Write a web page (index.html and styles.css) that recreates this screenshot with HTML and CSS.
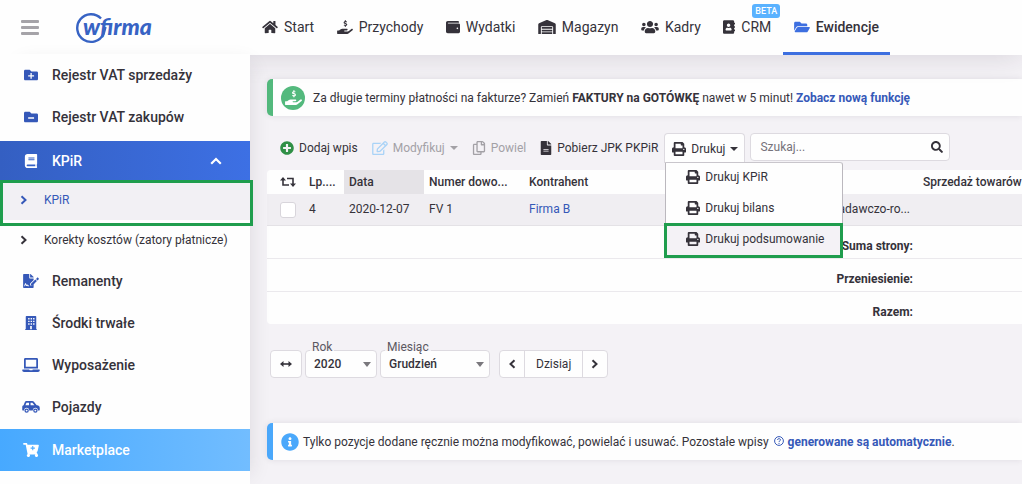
FILE: index.html
```html
<!DOCTYPE html>
<html lang="pl">
<head>
<meta charset="UTF-8">
<meta name="viewport" content="width=device-width, initial-scale=1.0">
<title>wfirma - KPiR</title>
<link rel="stylesheet" href="styles.css">
</head>
<body>
    <!-- ikony -->
    <svg class="sprite" aria-hidden="true">
        <symbol id="i-home" viewBox="0 0 576 512"><path d="M280.37 148.26L96 300.11V464a16 16 0 0 0 16 16l112.06-.29a16 16 0 0 0 15.92-16V368a16 16 0 0 1 16-16h64a16 16 0 0 1 16 16v95.64a16 16 0 0 0 16 16.05L464 480a16 16 0 0 0 16-16V300L295.67 148.26a12.19 12.19 0 0 0-15.3 0zM571.6 251.47L488 182.56V44.05a12 12 0 0 0-12-12h-56a12 12 0 0 0-12 12v72.61L318.47 43a48 48 0 0 0-61 0L4.34 251.47a12 12 0 0 0-1.6 16.9l25.5 31A12 12 0 0 0 45.15 301l235.22-193.74a12.19 12.19 0 0 1 15.3 0L530.9 301a12 12 0 0 0 16.9-1.6l25.5-31a12 12 0 0 0-1.7-16.93z"/></symbol>
        <symbol id="i-hand" viewBox="0 0 576 512"><path d="M565.3 328.1c-11.8-10.7-30.2-10-42.6 0L430.3 402c-11.3 9.1-25.4 14-40 14H272c-8.8 0-16-7.2-16-16s7.2-16 16-16h78.3c15.9 0 30.7-10.9 33.3-26.6 3.3-20-12.1-37.4-31.6-37.4H192c-27 0-53.1 9.3-74.1 26.3L71.4 384H16c-8.8 0-16 7.2-16 16v96c0 8.8 7.2 16 16 16h356.8c14.5 0 28.6-4.9 40-14L564 377c15.2-12.1 16.4-35.3 1.3-48.9z"/><path d="M352 72c-20-14-92-24-96 20-3 44 98 24 96 74-2 44-76 38-100 14M302 8v42M302 204v42" fill="none" stroke="currentColor" stroke-width="42"/></symbol>
        <symbol id="i-wallet" viewBox="0 0 512 512"><path d="M461.2 128H80c-8.84 0-16-7.16-16-16s7.16-16 16-16h384c8.84 0 16-7.16 16-16 0-26.51-21.49-48-48-48H64C28.65 32 0 60.65 0 96v320c0 35.35 28.65 64 64 64h397.2c28.02 0 50.8-21.53 50.8-48V176c0-26.47-22.78-48-50.8-48zM416 336c-17.67 0-32-14.33-32-32s14.33-32 32-32 32 14.33 32 32-14.33 32-32 32z"/></symbol>
        <symbol id="i-warehouse" viewBox="0 0 640 512"><path d="M504 352H136.4c-4.4 0-8 3.6-8 8l-.1 48c0 4.4 3.6 8 8 8H504c4.4 0 8-3.6 8-8v-48c0-4.4-3.6-8-8-8zm0 96H136.1c-4.4 0-8 3.6-8 8l-.1 48c0 4.4 3.6 8 8 8h368c4.4 0 8-3.6 8-8v-48c0-4.4-3.6-8-8-8zm0-192H136.6c-4.4 0-8 3.6-8 8l-.1 48c0 4.4 3.6 8 8 8H504c4.4 0 8-3.6 8-8v-48c0-4.4-3.6-8-8-8zm106.5-139L338.4 3.7a48.15 48.15 0 0 0-36.9 0L29.5 117C11.7 124.5 0 141.9 0 161.3V504c0 4.4 3.6 8 8 8h80c4.4 0 8-3.6 8-8V256c0-17.6 14.6-32 32.6-32h382.8c18 0 32.6 14.4 32.6 32v248c0 4.4 3.6 8 8 8h80c4.4 0 8-3.6 8-8V161.3c0-19.4-11.7-36.8-29.5-44.3z"/></symbol>
        <symbol id="i-users" viewBox="0 0 640 512"><path d="M96 224c35.3 0 64-28.7 64-64s-28.7-64-64-64-64 28.7-64 64 28.7 64 64 64zm448 0c35.3 0 64-28.7 64-64s-28.7-64-64-64-64 28.7-64 64 28.7 64 64 64zm32 32h-64c-17.6 0-33.5 7.1-45.1 18.6 40.3 22.1 68.9 62 75.1 109.4h66c17.7 0 32-14.3 32-32v-32c0-35.3-28.7-64-64-64zm-256 0c61.9 0 112-50.1 112-112S381.9 32 320 32 208 82.1 208 144s50.1 112 112 112zm76.8 32h-8.3c-20.8 10-43.9 16-68.5 16s-47.6-6-68.5-16h-8.3C179.6 288 128 339.6 128 403.2V432c0 26.5 21.5 48 48 48h288c26.5 0 48-21.5 48-48v-28.8c0-63.6-51.6-115.2-115.2-115.2zm-223.7-13.4C161.5 263.1 145.6 256 128 256H64c-35.3 0-64 28.7-64 64v32c0 17.7 14.3 32 32 32h65.9c6.3-47.4 34.9-87.3 75.2-109.4z"/></symbol>
        <symbol id="i-contacts" viewBox="0 0 448 512"><path d="M436 160c6.600 0 12-5.400 12-12v-40c0-6.600-5.400-12-12-12h-20V48c0-26.500-21.500-48-48-48H48C21.500 0 0 21.500 0 48v416c0 26.500 21.500 48 48 48h320c26.500 0 48-21.500 48-48v-48h20c6.600 0 12-5.400 12-12v-40c0-6.600-5.400-12-12-12h-20v-64h20c6.600 0 12-5.400 12-12v-40c0-6.600-5.400-12-12-12h-20v-64h20zm-228-32c35.300 0 64 28.700 64 64s-28.700 64-64 64-64-28.700-64-64 28.700-64 64-64zm112 236.800c0 10.600-10 19.200-22.400 19.200H118.400C106 384 96 375.400 96 364.800v-19.200c0-31.800 30.100-57.600 67.200-57.600h5c12.300 5.100 25.700 8 39.800 8s27.600-2.900 39.800-8h5c37.100 0 67.200 25.800 67.200 57.600v19.200z"/></symbol>
        <symbol id="i-folder-open" viewBox="0 0 576 512"><path d="M572.694 292.093L500.27 416.248A63.997 63.997 0 0 1 444.989 448H45.025c-18.523 0-30.064-20.093-20.731-36.093l72.424-124.155A64 64 0 0 1 152 256h399.964c18.523 0 30.064 20.093 20.73 36.093zM152 224h328v-48c0-26.51-21.49-48-48-48H272l-64-64H48C21.49 64 0 85.49 0 112v278.046l69.077-118.418C86.214 242.25 117.989 224 152 224z"/></symbol>
        <symbol id="i-folder-plus" viewBox="0 0 512 512"><path fill-rule="evenodd" d="M464 128H272l-64-64H48C21 64 0 85 0 112v288c0 27 21 48 48 48h416c27 0 48-21 48-48V176c0-27-21-48-48-48zM368 312h-84v84h-48v-84h-84v-48h84v-84h48v84h84z"/></symbol>
        <symbol id="i-folder-minus" viewBox="0 0 512 512"><path fill-rule="evenodd" d="M464 128H272l-64-64H48C21 64 0 85 0 112v288c0 27 21 48 48 48h416c27 0 48-21 48-48V176c0-27-21-48-48-48zM368 316H152v-48h216z"/></symbol>
        <symbol id="i-book" viewBox="0 0 448 512"><path d="M448 360V24c0-13.3-10.7-24-24-24H96C43 0 0 43 0 96v320c0 53 43 96 96 96h328c13.3 0 24-10.7 24-24v-16c0-7.5-3.5-14.3-8.9-18.7-4.2-15.4-4.2-59.3 0-74.7 5.4-4.3 8.9-11.1 8.9-18.6zM128 134c0-3.3 2.7-6 6-6h212c3.3 0 6 2.7 6 6v20c0 3.3-2.7 6-6 6H134c-3.3 0-6-2.700-6-6v-20zm0 64c0-3.300 2.700-6 6-6h212c3.300 0 6 2.700 6 6v20c0 3.300-2.700 6-6 6H134c-3.300 0-6-2.700-6-6v-20zm253.400 250H96c-17.700 0-32-14.300-32-32 0-17.600 14.400-32 32-32h285.400c-1.900 17.100-1.900 46.900 0 64z"/></symbol>
        <symbol id="i-signature" viewBox="0 0 576 512"><path fill-rule="evenodd" d="M24 0h200v136c0 13 11 24 24 24h136v60L256 346v70h74l54-54v126c0 13-11 24-24 24H24c-13 0-24-11-24-24V24C0 11 11 0 24 0zM64 448h150v-32h-22c-6 0-8-4-12-12-12-25-42-26-56-6l-14-40c-8-22-38-22-46 0l-20 58v32c18 0 26-8 30-20l14-40 14 42c5 16 26 18 34 3l8-15c8 8 12 20 32 30H64z"/><path d="M256 0h6c6 0 12 3 17 7l98 98c4 4 7 10 7 17v6H256zM288 360v58h56l160-160-56-56zM470 180l58 56 36-36c14-14 14-30 2-42l-18-18c-12-12-30-10-42 2z"/></symbol>
        <symbol id="i-building" viewBox="0 0 448 512"><path fill-rule="evenodd" d="M8 480h24V24C32 11 43 0 56 0h336c13 0 24 11 24 24v456h24v32H8zM120 72v52h52V72zm90 0v52h52V72zm90 0v52h52V72zM120 170v52h52v-52zm90 0v52h52v-52zm90 0v52h52v-52zM120 268v52h52v-52zm90 0v52h52v-52zm90 0v52h52v-52zM194 370v110h60V370z"/></symbol>
        <symbol id="i-laptop" viewBox="0 0 640 512"><path d="M624 416H381.54c-.74 19.81-14.71 32-32.74 32H288c-18.69 0-33.02-17.47-32.77-32H16c-8.8 0-16 7.2-16 16v16c0 35.2 28.8 64 64 64h512c35.2 0 64-28.8 64-64v-16c0-8.8-7.2-16-16-16zM576 48c0-26.4-21.6-48-48-48H112C85.6 0 64 21.6 64 48v336h512V48zm-64 272H128V64h384v256z"/></symbol>
        <symbol id="i-car" viewBox="0 0 640 512"><path fill-rule="evenodd" d="M544 192h-16L419 56c-12-15-31-24-50-24H155c-26 0-50 16-59 40L48 195C20 202 0 227 0 256v112c0 9 7 16 16 16h49c-1-62 37-104 95-104s96 42 95 104h130c-1-62 37-104 95-104s96 42 95 104h49c9 0 16-7 16-16v-80c0-53-43-96-96-96zM248 192H116l38-96h94zm56 0V96h65l77 96z"/><circle cx="160" cy="388" r="58" fill="none" stroke="currentColor" stroke-width="46"/><circle cx="480" cy="388" r="58" fill="none" stroke="currentColor" stroke-width="46"/></symbol>
        <symbol id="i-cart" viewBox="0 0 576 512"><path fill-rule="evenodd" d="M24 0h102c11 0 21 8 23 19l10 45h393c15 0 27 14 23 29l-47 208c-3 11-12 19-24 19l-8 32c15 0 27 14 23 29l-6 24a56 56 0 1 1-64 11H232a56 56 0 1 1-67-9L94 64H24C11 64 0 53 0 40V24C0 11 11 0 24 0zM430 166h-58v-58h-40v58h-58v40h58v58h40v-58h58z"/></symbol>
        <symbol id="i-plus" viewBox="0 0 512 512"><path d="M256 8C119 8 8 119 8 256s111 248 248 248 248-111 248-248S393 8 256 8zm144 276c0 6.600-5.400 12-12 12h-92v92c0 6.600-5.400 12-12 12h-56c-6.600 0-12-5.400-12-12v-92h-92c-6.600 0-12-5.400-12-12v-56c0-6.600 5.400-12 12-12h92v-92c0-6.600 5.400-12 12-12h56c6.600 0 12 5.400 12 12v92h92c6.600 0 12 5.400 12 12v56z"/></symbol>
        <symbol id="i-edit" viewBox="0 0 576 512"><path d="M402.3 344.9l32-32c5-5 13.7-1.5 13.7 5.7V464c0 26.5-21.5 48-48 48H48c-26.5 0-48-21.5-48-48V112c0-26.5 21.5-48 48-48h273.5c7.1 0 10.7 8.6 5.7 13.7l-32 32c-1.5 1.5-3.5 2.3-5.7 2.3H48v352h352V350.5c0-2.1.8-4.1 2.3-5.6zm156.6-201.8L296.3 405.7l-90.4 10c-26.2 2.9-48.5-19.2-45.6-45.6l10-90.4L432.9 17.1c22.9-22.9 59.9-22.9 82.7 0l43.2 43.2c22.9 22.9 22.9 60 .1 82.8zM460.1 174L402 115.9 216.2 301.8l-7.3 65.3 65.3-7.3L460.1 174zm64.8-79.7l-43.2-43.2c-4.1-4.1-10.8-4.1-14.8 0L436 82l58.1 58.1 30.9-30.9c4-4.2 4-10.8-.1-14.9z"/></symbol>
        <symbol id="i-copy" viewBox="0 0 448 512"><path d="M433.941 65.941l-51.882-51.882A48 48 0 0 0 348.118 0H176c-26.51 0-48 21.49-48 48v48H48c-26.51 0-48 21.49-48 48v320c0 26.51 21.49 48 48 48h224c26.51 0 48-21.49 48-48v-48h80c26.51 0 48-21.49 48-48V99.882a48 48 0 0 0-14.059-33.941zM266 464H54a6 6 0 0 1-6-6V150a6 6 0 0 1 6-6h74v224c0 26.51 21.49 48 48 48h96v42a6 6 0 0 1-6 6zm128-96H182a6 6 0 0 1-6-6V54a6 6 0 0 1 6-6h106v88c0 13.255 10.745 24 24 24h88v202a6 6 0 0 1-6 6zm6-256h-64V48h9.632c1.591 0 3.117.632 4.243 1.757l48.368 48.368a6 6 0 0 1 1.757 4.243V112z"/></symbol>
        <symbol id="i-file" viewBox="0 0 384 512"><path d="M224 136V0H24C10.7 0 0 10.7 0 24v464c0 13.3 10.7 24 24 24h336c13.3 0 24-10.7 24-24V160H248c-13.2 0-24-10.8-24-24zm64 236c0 6.6-5.4 12-12 12H108c-6.6 0-12-5.4-12-12v-8c0-6.6 5.4-12 12-12h168c6.6 0 12 5.4 12 12v8zm0-64c0 6.6-5.4 12-12 12H108c-6.6 0-12-5.4-12-12v-8c0-6.6 5.4-12 12-12h168c6.6 0 12 5.4 12 12v8zm96-186.1v6.1H256V0h6.1c6.4 0 12.5 2.5 17 7l97.900 98c4.500 4.500 7 10.600 7 16.900z"/></symbol>
        <symbol id="i-print" viewBox="0 0 512 512"><path d="M448 192V77.25c0-8.49-3.37-16.62-9.37-22.63L393.37 9.37c-6-6-14.14-9.37-22.63-9.37H96C78.33 0 64 14.33 64 32v160c-35.35 0-64 28.65-64 64v112c0 8.84 7.16 16 16 16h48v96c0 17.67 14.33 32 32 32h320c17.67 0 32-14.33 32-32v-96h48c8.84 0 16-7.16 16-16V256c0-35.35-28.65-64-64-64zm-64 256H128v-96h256v96zm0-224H128V64h192v48c0 8.84 7.16 16 16 16h48v96zm48 72c-13.25 0-24-10.75-24-24 0-13.26 10.75-24 24-24s24 10.74 24 24c0 13.25-10.75 24-24 24z"/></symbol>
        <symbol id="i-search" viewBox="0 0 512 512"><path d="M505 442.7L405.3 343c-4.5-4.5-10.6-7-17-7H372c27.6-35.3 44-79.7 44-128C416 93.1 322.9 0 208 0S0 93.1 0 208s93.1 208 208 208c48.3 0 92.7-16.4 128-44v16.3c0 6.4 2.5 12.5 7 17l99.7 99.7c9.4 9.4 24.6 9.4 33.9 0l28.3-28.3c9.4-9.4 9.4-24.6.1-34zM208 336c-70.700 0-128-57.200-128-128 0-70.700 57.200-128 128-128 70.700 0 128 57.200 128 128 0 70.700-57.200 128-128 128z"/></symbol>
        <symbol id="i-info" viewBox="0 0 512 512"><path d="M256 8C119.043 8 8 119.083 8 256c0 136.997 111.043 248 248 248s248-111.003 248-248C504 119.083 392.957 8 256 8zm0 110c23.196 0 42 18.804 42 42s-18.804 42-42 42-42-18.804-42-42 18.804-42 42-42zm56 254c0 6.627-5.373 12-12 12h-88c-6.627 0-12-5.373-12-12v-24c0-6.627 5.373-12 12-12h12v-64h-12c-6.627 0-12-5.373-12-12v-24c0-6.627 5.373-12 12-12h64c6.627 0 12 5.373 12 12v100h12c6.627 0 12 5.373 12 12v24z"/></symbol>
        <symbol id="i-help" viewBox="0 0 10 10"><circle cx="5" cy="5" r="4.400" fill="none" stroke="currentColor"/><path d="M3.500 4C3.500 2.200 6.500 2.200 6.500 3.900 6.500 4.900 5 4.800 5 6" fill="none" stroke="currentColor"/><circle cx="5" cy="7.300" r=".6"/></symbol>
        <symbol id="i-retweet" viewBox="0 0 16 12"><path d="M3 2.500V9h6M7 2.500h6V9" fill="none" stroke="currentColor" stroke-width="1.600"/><path d="M0 4.500L3 1l3 3.500zM10 7.500l3 3.500 3-3.500z"/></symbol>
        <symbol id="i-arrows" viewBox="0 0 12 8"><path d="M2 4h8" stroke="currentColor" stroke-width="1.600"/><path d="M0 4l3.500-3v6zM12 4L8.500 1v6z"/></symbol>
        <symbol id="i-right" viewBox="0 0 8 10"><path d="M1.500 1.200L5.500 5l-4 3.800" fill="none" stroke="currentColor" stroke-width="2"/></symbol>
        <symbol id="i-left" viewBox="0 0 8 10"><path d="M6.500 1.200L2.500 5l4 3.800" fill="none" stroke="currentColor" stroke-width="2"/></symbol>
        <symbol id="i-up" viewBox="0 0 12 8"><path d="M1.200 6.800L6 2l4.800 4.800" fill="none" stroke="currentColor" stroke-width="2.200"/></symbol>
    </svg>

    <header class="header">
        <div class="brand">
            <button class="burger" aria-label="Menu"><span></span><span></span><span></span></button>
            <a href="#" class="logo" aria-label="wfirma">
                <svg width="80" height="32" viewBox="0 0 80 32">
                    <path d="M26 6.500A13.800 13.800 0 1 0 28.500 22Q29.500 19 30.500 15" fill="none" stroke="#3763c4" stroke-width="2.400"/>
                    <text x="8" y="23" class="logo-text">wfirma</text>
                </svg>
            </a>
        </div>
        <nav class="top-nav">
            <a href="#"><svg class="w16"><use href="#i-home"/></svg>Start</a>
            <a href="#"><svg class="w16"><use href="#i-hand"/></svg>Przychody</a>
            <a href="#"><svg class="w14"><use href="#i-wallet"/></svg>Wydatki</a>
            <a href="#"><svg class="w18"><use href="#i-warehouse"/></svg>Magazyn</a>
            <a href="#"><svg class="w18"><use href="#i-users"/></svg>Kadry</a>
            <a href="#"><svg class="w12"><use href="#i-contacts"/></svg>CRM<span class="beta">BETA</span></a>
            <a href="#" class="active"><svg class="w16"><use href="#i-folder-open"/></svg>Ewidencje</a>
        </nav>
    </header>

    <div class="page">
        <aside class="sidebar">
            <a href="#" class="side-item"><svg><use href="#i-folder-plus"/></svg>Rejestr VAT sprzedaży</a>
            <a href="#" class="side-item"><svg><use href="#i-folder-minus"/></svg>Rejestr VAT zakupów</a>
            <a href="#" class="side-item open"><svg><use href="#i-book"/></svg>KPiR<svg class="side-arrow"><use href="#i-up"/></svg></a>
            <a href="#" class="sub-item current"><svg><use href="#i-right"/></svg>KPiR</a>
            <a href="#" class="sub-item"><svg><use href="#i-right"/></svg>Korekty kosztów (zatory płatnicze)</a>
            <a href="#" class="side-item"><svg><use href="#i-signature"/></svg>Remanenty</a>
            <a href="#" class="side-item"><svg><use href="#i-building"/></svg>Środki trwałe</a>
            <a href="#" class="side-item"><svg><use href="#i-laptop"/></svg>Wyposażenie</a>
            <a href="#" class="side-item"><svg><use href="#i-car"/></svg>Pojazdy</a>
            <a href="#" class="side-item market"><svg><use href="#i-cart"/></svg>Marketplace</a>
        </aside>

        <main class="main">
            <div class="notice green">
                <span class="coin"><svg><use href="#i-hand"/></svg></span>
                <p>Za długie terminy płatności na fakturze? Zamień <b>FAKTURY na GOTÓWKĘ</b> nawet w 5 minut! <a href="#">Zobacz nową funkcję</a></p>
            </div>

            <div class="toolbar">
                <button class="tool"><svg class="w14 add"><use href="#i-plus"/></svg>Dodaj wpis</button>
                <button class="tool" disabled><svg class="w16 edit"><use href="#i-edit"/></svg>Modyfikuj<span class="caret"></span></button>
                <button class="tool" disabled><svg class="w14"><use href="#i-copy"/></svg>Powiel</button>
                <button class="tool"><svg class="w12"><use href="#i-file"/></svg>Pobierz JPK PKPiR</button>
                <div class="dropdown">
                    <button class="tool boxed"><svg class="w14"><use href="#i-print"/></svg>Drukuj<span class="caret"></span></button>
                    <div class="menu">
                        <a href="#"><svg><use href="#i-print"/></svg>Drukuj KPiR</a>
                        <a href="#"><svg><use href="#i-print"/></svg>Drukuj bilans</a>
                        <a href="#" class="current"><svg><use href="#i-print"/></svg>Drukuj podsumowanie</a>
                    </div>
                </div>
                <div class="search">
                    <input type="text" placeholder="Szukaj..." aria-label="Szukaj">
                    <button aria-label="Szukaj"><svg><use href="#i-search"/></svg></button>
                </div>
            </div>

            <table class="grid">
                <colgroup>
                    <col class="c-check"><col class="c-lp"><col class="c-date"><col class="c-num"><col class="c-firm"><col class="c-desc"><col class="c-sale">
                </colgroup>
                <thead>
                    <tr>
                        <th class="check"><svg class="retweet"><use href="#i-retweet"/></svg></th>
                        <th class="lp">Lp....</th>
                        <th class="sorted">Data</th>
                        <th>Numer dowo...</th>
                        <th>Kontrahent</th>
                        <th></th>
                        <th>Sprzedaż towarów</th>
                    </tr>
                </thead>
                <tbody>
                    <tr>
                        <td class="check"><input type="checkbox" aria-label="Zaznacz wpis 4"></td>
                        <td class="lp">4</td>
                        <td>2020-12-07</td>
                        <td>FV 1</td>
                        <td><a href="#">Firma B</a></td>
                        <td class="desc">badawczo-ro...</td>
                        <td></td>
                    </tr>
                </tbody>
                <tfoot>
                    <tr><th colspan="6">Suma strony:</th><td></td></tr>
                    <tr><th colspan="6">Przeniesienie:</th><td></td></tr>
                    <tr><th colspan="6">Razem:</th><td></td></tr>
                </tfoot>
            </table>

            <div class="pager">
                <button class="btn" aria-label="Zakres"><svg class="arrows"><use href="#i-arrows"/></svg></button>
                <div class="field year">
                    <label for="year">Rok</label>
                    <select id="year"><option>2020</option></select>
                </div>
                <div class="field month">
                    <label for="month">Miesiąc</label>
                    <select id="month"><option>Grudzień</option></select>
                </div>
                <div class="group">
                    <button aria-label="Poprzedni"><svg><use href="#i-left"/></svg></button>
                    <button>Dzisiaj</button>
                    <button aria-label="Następny"><svg><use href="#i-right"/></svg></button>
                </div>
            </div>

            <div class="notice blue">
                <svg class="info"><use href="#i-info"/></svg>
                <p>Tylko pozycje dodane ręcznie można modyfikować, powielać i usuwać. Pozostałe wpisy <a href="#"><svg class="help"><use href="#i-help"/></svg>generowane są automatycznie</a>.</p>
            </div>
        </main>
    </div>
</body>
</html>
```

FILE: styles.css
```css
* {
    box-sizing: border-box;
}
body {
    margin: 0;
    min-height: 100vh;
    display: flex;
    flex-direction: column;
    overflow-x: hidden;
    background: #f4f2f6;
    color: #35323a;
    font-family: Roboto, "Liberation Sans", sans-serif;
    font-size: 12px;
    line-height: 16px;
}
a {
    color: #3558b8;
    text-decoration: none;
}
button, input, select {
    font: inherit;
    color: inherit;
}
button {
    margin: 0;
    padding: 0;
    border: none;
    background: none;
    cursor: pointer;
}
svg {
    fill: currentColor;
    flex: none;
}
.sprite {
    position: absolute;
    width: 0;
    height: 0;
}
.w12, .w14, .w16, .w18 {
    height: 14px;
}
.w12 { width: 12px; }
.w14 { width: 14px; }
.w16 { width: 16px; }
.w18 { width: 18px; }

/* górny pasek */
.header {
    position: relative;
    z-index: 3;
    display: flex;
    height: 55px;
    background: #fefefe;
    box-shadow: 0 0 30px rgba(40, 30, 50, 0.15);
}
.brand {
    display: flex;
    align-items: center;
    gap: 36px;
    width: 251px;
    padding-left: 21px;
}
.burger {
    display: flex;
    flex-direction: column;
    gap: 3px;
    width: 18px;
}
.burger span {
    height: 3px;
    border-radius: 1px;
    background: #a5a3a8;
}
.logo svg {
    display: block;
}
.logo-text {
    fill: #3763c4;
    font-family: Lato, sans-serif;
    font-size: 23px;
    font-style: italic;
    font-weight: 900;
}
.top-nav {
    display: flex;
    justify-content: space-between;
    width: 639px;
}
.top-nav a {
    position: relative;
    display: flex;
    align-items: center;
    gap: 6px;
    padding: 1px 11px 0;
    border-bottom: 3px solid transparent;
    color: #35323a;
    font-size: 14px;
}
.top-nav a.active {
    border-color: #3d6fe0;
    font-weight: 500;
}
.top-nav a.active svg {
    color: #3d6fe0;
}
.beta {
    position: absolute;
    top: 4px;
    right: 2px;
    padding: 0 3px;
    border-radius: 3px;
    background: #5ab2ff;
    color: #fff;
    font-size: 9px;
    font-weight: 500;
    line-height: 14px;
}

.page {
    display: flex;
    flex: 1;
}

/* menu boczne */
.sidebar {
    position: relative;
    z-index: 4;
    flex: none;
    width: 250px;
    margin-top: -1px;
    background: #fefefe;
    box-shadow: 10px 0 20px -10px rgba(40, 30, 50, 0.12);
}
.side-item {
    display: flex;
    align-items: center;
    gap: 12px;
    height: 42px;
    padding-left: 22px;
    color: #35323a;
    font-size: 14px;
    font-weight: 500;
}
.side-item svg {
    width: 18px;
    height: 14px;
    color: #3558b8;
}
.side-item.open {
    height: 39px;
    margin-top: 3px;
    background: linear-gradient(90deg, #345fc2, #3d70e4);
    color: #fff;
}
.side-item.open svg, .side-item.market svg {
    color: #fff;
}
.side-item .side-arrow {
    width: 12px;
    height: 8px;
    margin-left: auto;
    margin-right: 28px;
}
.side-item.market {
    margin-top: 1px;
    background: linear-gradient(90deg, #47a9ff, #72bdff);
    color: #fff;
}
.sub-item {
    position: relative;
    display: flex;
    align-items: center;
    gap: 16px;
    height: 40px;
    padding-left: 20px;
    color: #35323a;
}
.sub-item svg {
    width: 8px;
    height: 10px;
}
.sub-item.current {
    background: #f2f0f4;
    color: #3558b8;
}
.sub-item.current::after {
    content: "";
    position: absolute;
    z-index: 1;
    top: 0;
    right: -3px;
    bottom: -6px;
    left: 0;
    border: 3px solid #1f9d4d;
}

/* treść */
.main {
    flex: 1;
    min-width: 0;
    padding: 24px 0 24px 17px;
    overflow: hidden;
}
.notice {
    display: flex;
    align-items: center;
    height: 37px;
    padding-left: 8px;
    border-left: 6px solid #53b97d;
    border-radius: 5px 0 0 5px;
    background: #fefefe;
    box-shadow: 0 0 6px rgba(40, 30, 50, 0.1);
}
.notice p {
    margin: 0;
    white-space: nowrap;
}
.notice b, .notice a {
    font-weight: 700;
}
.notice.green {
    gap: 8px;
}
.notice.blue {
    gap: 4px;
    border-color: #4aa8fb;
}
.coin {
    display: flex;
    align-items: center;
    justify-content: center;
    width: 24px;
    height: 24px;
    border-radius: 50%;
    background: #53b97d;
    color: #fff;
}
.coin svg {
    width: 17px;
    height: 15px;
}
.info {
    width: 18px;
    height: 18px;
    color: #4aa8fb;
}
.help {
    width: 10px;
    height: 10px;
    margin: 0 4px 0 2px;
}

.toolbar {
    display: flex;
    padding: 17px 0 7px 6px;
}
.tool {
    display: flex;
    align-items: center;
    gap: 5px;
    height: 30px;
    padding: 0 7px;
    white-space: nowrap;
}
.tool:disabled {
    color: #a3a1a6;
}
.add {
    color: #2f8f46;
}
.edit {
    color: #a9d3f7;
}
.caret {
    border: 4px solid transparent;
    border-top-color: currentColor;
    border-bottom: none;
}
.dropdown {
    position: relative;
    margin: 0 5px 0 -1px;
}
.tool.boxed {
    padding: 0 6px 0 7px;
    border: 1px solid #dddae0;
    border-bottom: none;
    border-radius: 4px 4px 0 0;
    background: #fefefe;
}
.menu {
    position: absolute;
    z-index: 2;
    top: 29px;
    left: 1px;
    width: 178px;
    background: #fefefe;
    border: 1px solid #bbb8be;
    border-top-color: #c9c6cc;
    border-radius: 0 3px 0 0;
}
.menu a {
    position: relative;
    display: flex;
    align-items: center;
    gap: 5px;
    height: 31px;
    padding: 0 0 4px 20px;
    color: #35323a;
}
.menu svg {
    width: 14px;
    height: 14px;
}
.menu .current {
    background: #f4f2f6;
}
.menu .current::after {
    content: "";
    position: absolute;
    top: -2px;
    right: -1px;
    bottom: -2px;
    left: -2px;
    border: 3px solid #1f9d4d;
}
.search {
    display: flex;
    align-items: center;
    width: 200px;
    height: 28px;
    padding: 0 6px 0 9px;
    border: 1px solid #dddae0;
    border-radius: 4px;
    background: #fefefe;
}
.search input {
    flex: 1;
    min-width: 0;
    padding: 0;
    border: none;
    outline: none;
    background: none;
}
.search input::placeholder {
    color: #75727a;
}
.search svg {
    display: block;
    width: 12px;
    height: 12px;
}

/* tabela */
.grid {
    width: 100%;
    min-width: 755px;
    table-layout: fixed;
    border-collapse: separate;
    border-spacing: 0;
    border-radius: 4px 0 0 4px;
    background: #fefefe;
    overflow: hidden;
}
.c-check { width: 34px; }
.c-lp { width: 43px; }
.c-date { width: 80px; }
.c-num { width: 100px; }
.c-firm { width: 260px; }
.c-desc { width: 134px; }
.grid th, .grid td {
    padding: 0 5px;
    text-align: left;
    white-space: nowrap;
}
.grid th {
    font-weight: 500;
}
.grid thead th {
    height: 24px;
}
.grid .sorted {
    background: #e5e3e7;
}
.grid tbody td {
    height: 32px;
    padding-bottom: 2px;
    border-bottom: 1px solid #e4e2e6;
    background: #f0eef2;
}
.grid .check {
    padding: 0 0 0 13px;
}
.grid .lp {
    padding-left: 8px;
    padding-right: 0;
}
.grid .desc {
    padding-right: 8px;
    text-align: right;
}
.grid input {
    display: block;
    appearance: none;
    width: 16px;
    height: 16px;
    margin: 0;
    border: 1px solid #d8d5db;
    border-radius: 3px;
    background: #fff;
}
.retweet {
    display: block;
    width: 16px;
    height: 12px;
}
.grid tfoot th, .grid tfoot td {
    height: 33px;
    padding-top: 8px;
    border-bottom: 1px solid #ebe9ed;
    font-weight: 700;
    text-align: right;
}
.grid tfoot tr:last-child > * {
    height: 32px;
    border-bottom: none;
}

/* okres */
.pager {
    display: flex;
    align-items: center;
    gap: 3px;
    padding: 26px 0 45px 3px;
}
.btn, .group, .field select {
    height: 28px;
    border: 1px solid #dddae0;
    border-radius: 4px;
    background: #fefefe;
}
.btn {
    display: flex;
    align-items: center;
    justify-content: center;
    width: 32px;
}
.arrows {
    width: 12px;
    height: 8px;
}
.field {
    position: relative;
}
.field label {
    position: absolute;
    top: -10px;
    left: 5px;
    padding: 0 2px;
    background: linear-gradient(#f4f2f6 11px, #fefefe 11px);
    color: #5b5861;
    line-height: 14px;
}
.field select {
    appearance: none;
    display: block;
    width: 100%;
    padding: 0 8px;
    font-weight: 500;
}
.field::after {
    content: "";
    position: absolute;
    top: 12px;
    right: 6px;
    border: 4px solid transparent;
    border-top: 5px solid #7a787d;
    border-bottom: none;
    pointer-events: none;
}
.year {
    width: 72px;
}
.month {
    width: 110px;
    margin-right: 6px;
}
.group {
    display: flex;
}
.group button {
    display: flex;
    align-items: center;
    padding: 0 8px;
}
.group button:nth-child(2) {
    padding: 0 11px;
    border: 1px solid #dddae0;
    border-width: 0 1px;
}
.group svg {
    width: 8px;
    height: 10px;
}
```
